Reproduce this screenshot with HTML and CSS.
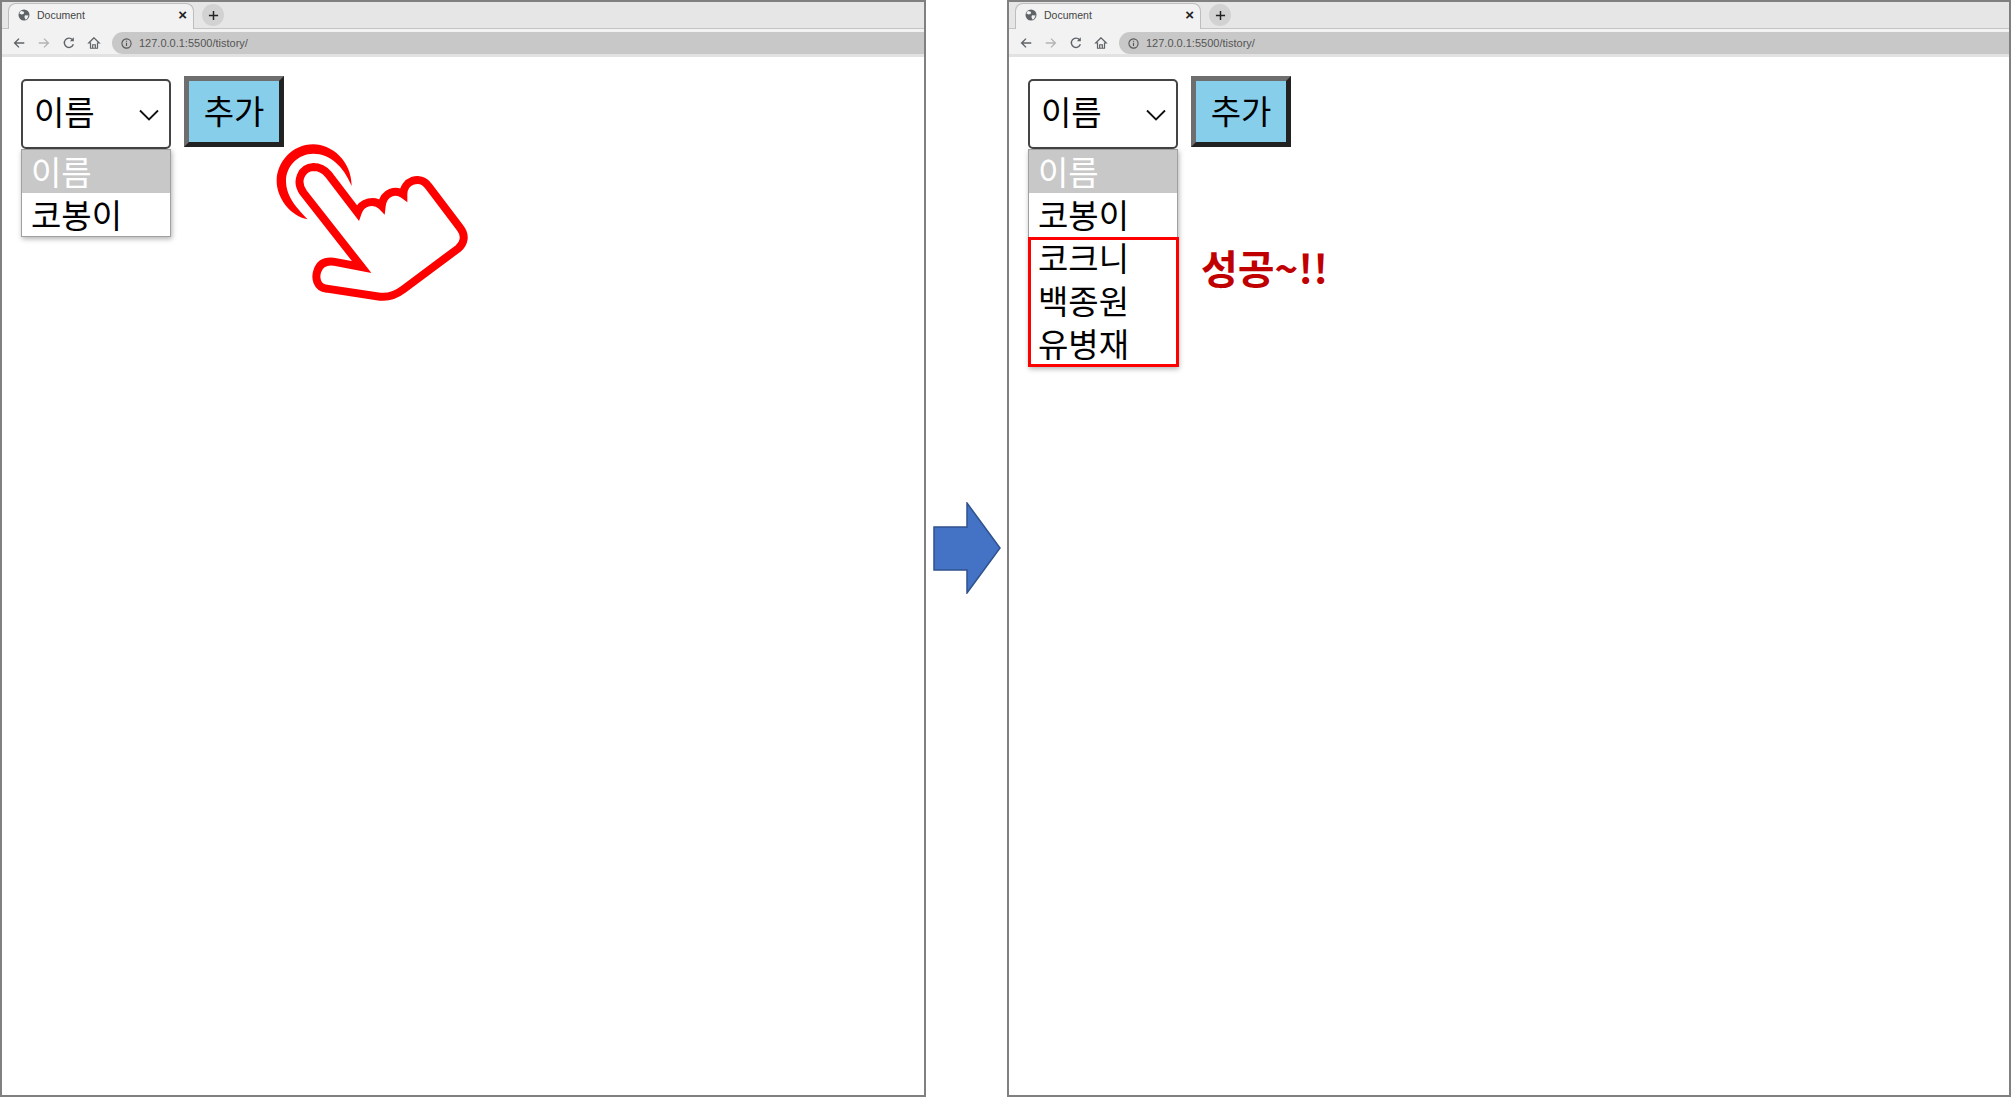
FILE: index.html
```html
<!DOCTYPE html>
<html lang="ko">
<head>
    <meta charset="UTF-8">
    <title>Document</title>
    <link rel="stylesheet" href="styles.css">
</head>
<body>

    <!-- 왼쪽 창 -->
    <div class="window window-left">
        <div class="tabstrip">
            <div class="tab">
                <svg class="globe" viewBox="0 0 12 12"><circle cx="6" cy="6" r="5.5" fill="#5f6368"/><path d="M3 1.8 6.2 3 5.6 5 3.4 5.4 1.2 4.2ZM7 6.2l3.6.4L9 10l-1.6.6L6.4 8Z" fill="#f2f2f2"/></svg>
                <span class="tab-title">Document</span>
                <span class="tab-close">×</span>
            </div>
            <div class="new-tab"><svg viewBox="0 0 12 12"><path d="M6 1v10M1 6h10" stroke="#222" stroke-width="1.6"/></svg></div>
        </div>
        <div class="toolbar">
            <svg class="nav" viewBox="0 0 16 16"><path d="M14 8H3M8 3 3 8l5 5" fill="none" stroke="#5f6368" stroke-width="1.6"/></svg>
            <svg class="nav" viewBox="0 0 16 16"><path d="M2 8h11M8 3l5 5-5 5" fill="none" stroke="#b4b4b4" stroke-width="1.6"/></svg>
            <svg class="nav" viewBox="0 0 16 16"><path d="M13 9.5A5.3 5.3 0 1 1 12 4.300" fill="none" stroke="#5f6368" stroke-width="1.6"/><path d="M13.500 1.500v4.500H9Z" fill="#5f6368"/></svg>
            <svg class="nav" viewBox="0 0 16 16"><path d="M8 2 2 8h2v6h8V8h2ZM6.500 14v-4h3v4" fill="none" stroke="#5f6368" stroke-width="1.400"/></svg>
            <div class="address">
                <svg class="info" viewBox="0 0 12 12"><circle cx="6" cy="6" r="5" fill="none" stroke="#555" stroke-width="1.200"/><path d="M6 5.200v3.600M6 3v1.200" stroke="#555" stroke-width="1.200"/></svg>
                <span>127.0.0.1:5500/tistory/</span>
            </div>
        </div>
        <div class="page">
            <div class="picker">
                <div class="select">
                    <span>이름</span>
                    <svg class="chevron" viewBox="0 0 20 12"><path d="M1 1.500 10 10.500 19 1.500" fill="none" stroke="#111" stroke-width="1.800"/></svg>
                </div>
                <div class="options">
                    <div class="option option-active">이름</div>
                    <div class="option">코봉이</div>
                </div>
            </div>
            <div class="side">
                <button class="add-button">추가</button>
            </div>
            <svg class="hand" viewBox="0 0 660 540">
                <path d="M275 165C275 90 215 40 160 40 95 40 50 95 50 150 50 200 90 255 143 265 115 235 78 200 78 150 78 105 115 68 160 68 210 68 250 105 275 165Z" fill="#f00"/>
                <path d="M305 408 130 185C105 150 125 110 160 108 180 108 195 118 205 130L293 245C305 210 345 205 365 225 370 180 410 175 430 190 430 150 480 130 505 165L600 290C620 315 610 340 595 352L430 475C410 490 385 500 360 497L200 473C170 470 165 440 172 420 180 395 200 390 220 392Z" fill="#fff" stroke="#f00" stroke-width="24" stroke-linejoin="miter"/>
            </svg>
        </div>
    </div>

    <div class="arrow-col">
        <svg class="arrow" viewBox="0 0 68 92"><path d="M1 25H34V1L67 46 34 91V68H1Z" fill="#4472c4" stroke="#2f528f" stroke-width="1.500"/></svg>
    </div>

    <!-- 오른쪽 창 -->
    <div class="window window-right">
        <div class="tabstrip">
            <div class="tab">
                <svg class="globe" viewBox="0 0 12 12"><circle cx="6" cy="6" r="5.5" fill="#5f6368"/><path d="M3 1.8 6.2 3 5.6 5 3.4 5.4 1.2 4.2ZM7 6.2l3.6.4L9 10l-1.6.6L6.4 8Z" fill="#f2f2f2"/></svg>
                <span class="tab-title">Document</span>
                <span class="tab-close">×</span>
            </div>
            <div class="new-tab"><svg viewBox="0 0 12 12"><path d="M6 1v10M1 6h10" stroke="#222" stroke-width="1.6"/></svg></div>
        </div>
        <div class="toolbar">
            <svg class="nav" viewBox="0 0 16 16"><path d="M14 8H3M8 3 3 8l5 5" fill="none" stroke="#5f6368" stroke-width="1.6"/></svg>
            <svg class="nav" viewBox="0 0 16 16"><path d="M2 8h11M8 3l5 5-5 5" fill="none" stroke="#b4b4b4" stroke-width="1.6"/></svg>
            <svg class="nav" viewBox="0 0 16 16"><path d="M13 9.5A5.3 5.3 0 1 1 12 4.300" fill="none" stroke="#5f6368" stroke-width="1.6"/><path d="M13.500 1.500v4.500H9Z" fill="#5f6368"/></svg>
            <svg class="nav" viewBox="0 0 16 16"><path d="M8 2 2 8h2v6h8V8h2ZM6.500 14v-4h3v4" fill="none" stroke="#5f6368" stroke-width="1.400"/></svg>
            <div class="address">
                <svg class="info" viewBox="0 0 12 12"><circle cx="6" cy="6" r="5" fill="none" stroke="#555" stroke-width="1.200"/><path d="M6 5.200v3.600M6 3v1.200" stroke="#555" stroke-width="1.200"/></svg>
                <span>127.0.0.1:5500/tistory/</span>
            </div>
        </div>
        <div class="page">
            <div class="picker">
                <div class="select">
                    <span>이름</span>
                    <svg class="chevron" viewBox="0 0 20 12"><path d="M1 1.500 10 10.500 19 1.500" fill="none" stroke="#111" stroke-width="1.800"/></svg>
                </div>
                <div class="options">
                    <div class="option option-active">이름</div>
                    <div class="option">코봉이</div>
                    <div class="added">
                        <div class="option">코크니</div>
                        <div class="option">백종원</div>
                        <div class="option">유병재</div>
                    </div>
                </div>
            </div>
            <div class="side">
                <button class="add-button">추가</button>
                <div class="success">성공~!!</div>
            </div>
        </div>
    </div>

</body>
</html>
```

FILE: styles.css
```css
body {
    margin: 0;
    width: 2011px;
    height: 1098px;
    display: flex;
    overflow: hidden;
    background-color: #fff;
    font-family: "Noto Sans CJK KR", "Liberation Sans", sans-serif;
    color: #000;
}
.window {
    box-sizing: border-box;
    height: 1097px;
    border: 2px solid #808080;
    display: flex;
    flex-direction: column;
}
.window-left {
    width: 926px;
}
.window-right {
    width: 1004px;
}
.arrow-col {
    width: 81px;
    display: flex;
    align-items: flex-start;
    justify-content: center;
    padding-top: 502px;
    box-sizing: border-box;
}
.arrow {
    width: 68px;
    height: 92px;
}
.tabstrip {
    height: 26px;
    background-color: #e6e6e6;
    display: flex;
    align-items: flex-end;
    padding-left: 6px;
    border-bottom: 1px solid #c4c4c4;
}
.tab {
    width: 186px;
    height: 26px;
    margin-bottom: -1px;
    box-sizing: border-box;
    display: flex;
    align-items: center;
    padding: 0 6px 4px 9px;
    background-color: #f2f2f2;
    border: 1px solid #bdbdbd;
    border-bottom: none;
    border-radius: 8px 8px 0 0;
}
.globe {
    width: 12px;
    height: 12px;
    margin-right: 7px;
}
.tab-title {
    flex: 1;
    font-family: "Liberation Sans", sans-serif;
    font-size: 10.500px;
    color: #444;
}
.tab-close {
    font-family: "Liberation Sans", sans-serif;
    font-size: 15px;
    font-weight: bold;
    line-height: 16px;
    color: #222;
}
.new-tab {
    width: 22px;
    height: 22px;
    margin: 0 0 2px 8px;
    border-radius: 50%;
    background-color: #d2d2d2;
    display: flex;
    align-items: center;
    justify-content: center;
}
.new-tab svg {
    width: 11px;
    height: 11px;
}
.toolbar {
    height: 22px;
    padding: 3px 0 0 10px;
    background-color: #f2f2f2;
    border-bottom: 3px solid #e2e2e2;
    display: flex;
    align-items: center;
    gap: 11px;
}
.nav {
    width: 14px;
    height: 14px;
}
.address {
    flex: 1;
    height: 22px;
    padding-left: 9px;
    background-color: #c8c8c8;
    border-radius: 11px 0 0 11px;
    display: flex;
    align-items: center;
    gap: 7px;
    font-family: "Liberation Sans", sans-serif;
    font-size: 11px;
    color: #555;
}
.info {
    width: 11px;
    height: 11px;
}
.page {
    flex: 1;
    position: relative;
    display: flex;
    align-items: flex-start;
    gap: 13px;
    padding: 19px 0 0 19px;
}
.picker {
    margin-top: 3px;
    width: 150px;
}
.select {
    box-sizing: border-box;
    height: 70px;
    padding: 0 10px 6px 11px;
    border: 2px solid #444;
    border-radius: 5px;
    display: flex;
    align-items: center;
    justify-content: space-between;
    font-size: 33px;
}
.chevron {
    width: 20px;
    height: 12px;
    margin-top: 8px;
}
.options {
    box-sizing: border-box;
    border: 1px solid #a0a0a0;
    box-shadow: 1px 2px 5px rgba(0, 0, 0, 0.3);
    background-color: #fff;
}
.option {
    height: 43px;
    padding-left: 9px;
    font-size: 33px;
    line-height: 43px;
    white-space: nowrap;
}
.option-active {
    background-color: #c8c8c8;
    color: #fff;
}
.added {
    box-sizing: border-box;
    height: 130px;
    margin: 1px -2px -1px -1px;
    border: 3px solid #f00;
}
.added .option {
    padding-left: 7px;
}
.added .option:first-child {
    margin-top: -4px;
}
.side {
    display: flex;
    flex-direction: column;
}
.add-button {
    width: 100px;
    height: 71px;
    padding: 0 0 4px;
    background-color: #87ceeb;
    border: 5px solid;
    border-color: #6e6e6e #222 #222 #6e6e6e;
    font-family: inherit;
    font-size: 33px;
    color: #000;
}
.success {
    margin: 95px 0 0 10px;
    font-size: 40px;
    font-weight: bold;
    line-height: 50px;
    color: #c00000;
    white-space: nowrap;
}
.hand {
    position: absolute;
    left: 258px;
    top: 74px;
    width: 220px;
    height: 180px;
}
```
